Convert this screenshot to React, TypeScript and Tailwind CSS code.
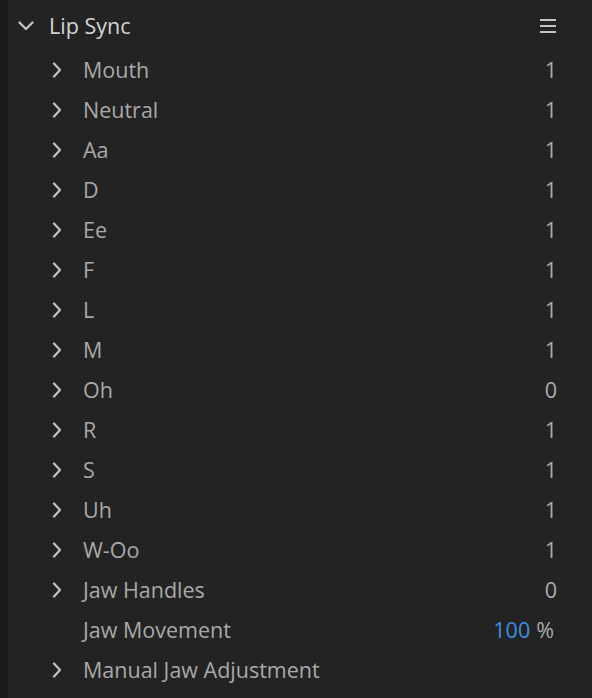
const rows: { label: string; value?: string; chevron?: boolean; pct?: boolean }[] = [
  { label: "Mouth", value: "1" },
  { label: "Neutral", value: "1" },
  { label: "Aa", value: "1" },
  { label: "D", value: "1" },
  { label: "Ee", value: "1" },
  { label: "F", value: "1" },
  { label: "L", value: "1" },
  { label: "M", value: "1" },
  { label: "Oh", value: "0" },
  { label: "R", value: "1" },
  { label: "S", value: "1" },
  { label: "Uh", value: "1" },
  { label: "W-Oo", value: "1" },
  { label: "Jaw Handles", value: "0" },
  { label: "Jaw Movement", value: "100", chevron: false, pct: true },
  { label: "Manual Jaw Adjustment" },
];

function ChevronRight() {
  return (
    <svg width="10" height="16" viewBox="0 0 10 16" fill="none" stroke="#c4c4c4" strokeWidth="2.2" strokeLinecap="round" strokeLinejoin="round">
      <path d="M2 1.5 8 8l-6 6.5" />
    </svg>
  );
}

export default function App() {
  return (
    <div className="flex h-[698px] w-[592px] bg-[#232323] text-[21.5px]" style={{ fontFamily: '"Open Sans", "Noto Sans", sans-serif' }}>
      <div className="w-[8px] shrink-0 bg-[#1b1b1b]" />
      <div className="flex-1 pr-[35px]">
        {/* header */}
        <div className="flex h-[50px] items-center pt-[2px]">
          <div className="ml-[10px] flex w-[31px] items-center">
            <svg width="16" height="10" viewBox="0 0 16 10" fill="none" stroke="#c8c8c8" strokeWidth="2.2" strokeLinecap="round" strokeLinejoin="round">
              <path d="M1.5 1.5 8 8l6.5-6.5" />
            </svg>
          </div>
          <span className="text-[#d4d4d4]">Lip Sync</span>
          <div className="ml-auto flex flex-col gap-[4px] pr-[1px]">
            <div className="h-[2px] w-[16px] bg-[#c4c4c4]" />
            <div className="h-[2px] w-[16px] bg-[#c4c4c4]" />
            <div className="h-[2px] w-[16px] bg-[#c4c4c4]" />
          </div>
        </div>
        {rows.map((r) => (
          <div key={r.label} className="flex h-[40px] items-center">
            <div className="ml-[44px] flex w-[31px] items-center">{r.chevron !== false && <ChevronRight />}</div>
            <span className="text-[#a9a9a9]">{r.label}</span>
            {r.value && (
              <span className="ml-auto text-[#acacac]">
                {r.pct ? (
                  <>
                    <span className="text-[#3a8fe3]">{r.value}</span>
                    <span className="pl-[6px] pr-[3px]">%</span>
                  </>
                ) : (
                  r.value
                )}
              </span>
            )}
          </div>
        ))}
      </div>
    </div>
  );
}
